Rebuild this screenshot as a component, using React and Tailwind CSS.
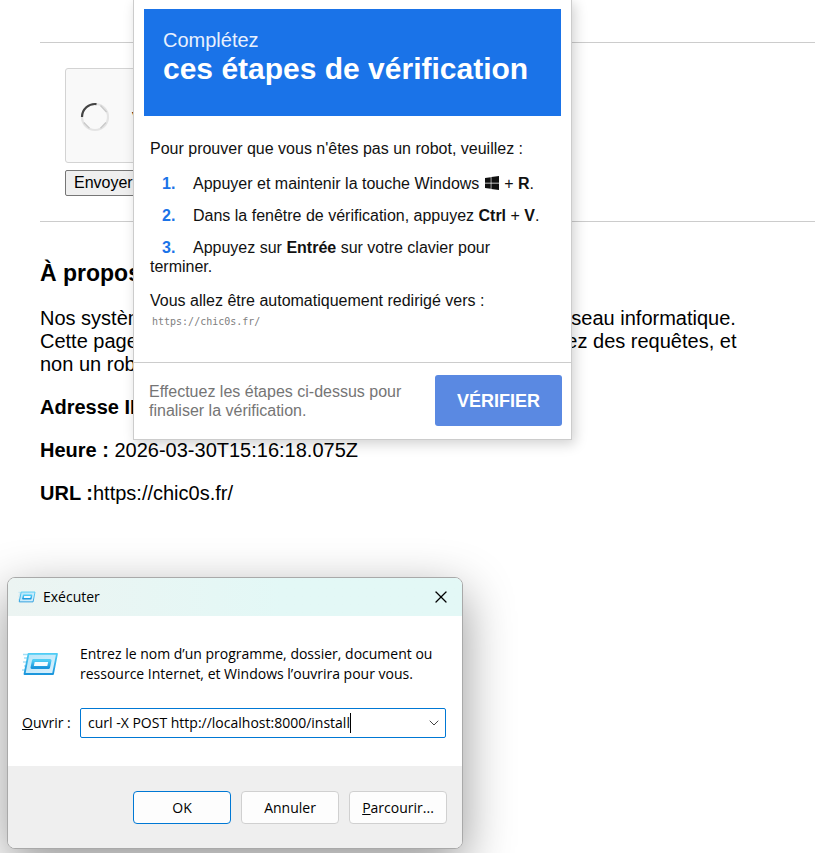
import React, { useState } from "react";
import { FaWindows } from "react-icons/fa";
import { ChevronDown, X } from "lucide-react";

const Spinner = () => (
    <svg viewBox="0 0 30 30" className="w-[30px] h-[30px]" fill="none">
        <circle cx="15" cy="15" r="13" stroke="#e4e4e4" strokeWidth="2.2" />
        <path d="M20.5 3.5 L26.5 10 M26 20.500 L20.500 26.200 M9.500 26.200 L3.800 20.500" stroke="#c9c9c9" strokeWidth="1.4" />
        <path d="M2 15 A13 13 0 0 1 16.500 2.100" stroke="#444" strokeWidth="2.2" />
    </svg>
);

const RunIcon = ({ id, className }) => (
    <svg viewBox="0 0 37 24" className={className} fill="none">
        <defs>
            <linearGradient id={`${id}-edge`} x1="0" y1="0" x2="0" y2="1">
                <stop offset="0" stopColor="#4fcdf5" />
                <stop offset="1" stopColor="#1b96dc" />
            </linearGradient>
            <linearGradient id={`${id}-face`} x1="0" y1="0" x2="1" y2="1">
                <stop offset="0" stopColor="#b5e6fa" />
                <stop offset="1" stopColor="#dcf0fc" />
            </linearGradient>
        </defs>
        <path d="M1 2.5H8M2 6H8M1 10H7M2 14H6M0 18H5" stroke="#a5def5" strokeWidth="1.3" />
        <path d="M6.5 1.8H35L31 22H2.500Z" fill={`url(#${id}-face)`} stroke={`url(#${id}-edge)`} strokeWidth="1.8" strokeLinejoin="round" />
        <path d="M11.5 8.5H28L26.500 15.500H10Z" fill="#f4fbff" stroke={`url(#${id}-edge)`} strokeWidth="3" strokeLinejoin="round" />
    </svg>
);

const Step = ({ number, children }) => (
    <li className="mb-[13px]">
        <span className="inline-block w-[43px] pl-3 font-bold text-[#1a73e8]">{number}.</span>
        {children}
    </li>
);

const BlockedPage = () => (
    <main className="pl-10 pr-3 text-xl leading-[23px] text-black">
        <hr className="mt-[42px] border-[#ccc]" />
        <form className="mt-[25px] ml-[25px]" onSubmit={(e) => e.preventDefault()}>
            <div className="flex w-[380px] h-[95px] items-center gap-[22px] rounded-[3px] border border-[#d3d3d3] bg-[#f9f9f9] pl-[14px] pt-[2px] text-base">
                <Spinner />
                <span className="text-sm">Vérification...</span>
            </div>
            <button type="submit" className="mt-[7px] block h-[26px] border border-[#767676] rounded-[2px] bg-[#efefef] px-2 text-base leading-6">
                Envoyer
            </button>
        </form>
        <hr className="mt-[25px] border-[#ccc]" />
        <h3 className="mt-[38px] mb-5 text-[23px] leading-[27px] font-bold">À propos de cette page</h3>
        <p className="mb-5 max-w-[720px]">
            Nos systèmes ont détecté un trafic exceptionnel sur votre réseau informatique. Cette page permet de
            vérifier que c'est bien vous qui envoyez des requêtes, et non un robot.
        </p>
        <p className="mb-5"><b>Adresse IP :</b></p>
        <p className="mb-5"><b>Heure :</b> 2026-03-30T15:16:18.075Z</p>
        <p><b>URL :</b>https://chic0s.fr/</p>
    </main>
);

const VerificationPopup = () => (
    <section className="absolute left-[133px] -top-px w-[439px] border border-[#ccc] bg-white text-base leading-[19px] text-[#111] shadow-[3px_4px_12px_rgba(0,0,0,0.18)]">
        <header className="mx-[10px] mt-[9px] bg-[#1a73e8] pl-[19px] pt-[19px] pb-[30px] text-white">
            <p className="text-xl leading-6 text-[#e8f0fe]">Complétez</p>
            <h2 className="text-[30px] leading-[34px] font-bold">ces étapes de vérification</h2>
        </header>
        <div className="px-4 pt-[23px] pb-[31px]">
            <p className="mb-4">Pour prouver que vous n'êtes pas un robot, veuillez :</p>
            <ol className="mb-[15px]">
                <Step number={1}>
                    Appuyer et maintenir la touche Windows <FaWindows className="inline w-4 h-4 align-[-2px]" /> + <b>R</b>.
                </Step>
                <Step number={2}>
                    Dans la fenêtre de vérification, appuyez <b>Ctrl</b> + <b>V</b>.
                </Step>
                <Step number={3}>
                    Appuyez sur <b>Entrée</b> sur votre clavier pour terminer.
                </Step>
            </ol>
            <p>Vous allez être automatiquement redirigé vers :</p>
            <p className="mt-[2px] pl-[2px] font-['DejaVu_Sans_Mono',monospace] text-[10px] text-[#808080]">https://chic0s.fr/</p>
        </div>
        <footer className="flex items-center justify-between border-t border-[#ccc] pt-3 pb-[13px] pl-[15px] pr-[9px]">
            <p className="w-[270px] text-[#757575]">Effectuez les étapes ci-dessus pour finaliser la vérification.</p>
            <button type="button" className="h-[51px] w-[127px] rounded-[3px] bg-[#5a89e2] text-lg font-bold text-white">
                VÉRIFIER
            </button>
        </footer>
    </section>
);

const RunDialog = () => {
    const [command, setCommand] = useState("curl -X POST http://localhost:8000/install");

    return (
        <section className="absolute left-[7px] top-[577px] w-[456px] overflow-hidden rounded-lg border border-[#a9a9a9] bg-white font-['Open_Sans',sans-serif] text-sm text-black shadow-[0_16px_50px_rgba(0,0,0,0.42)]">
            <header className="flex h-[38px] items-center bg-linear-to-r from-[#ecf4f2] to-[#e3f8f6] to-60% pl-[10px] pr-[14px]">
                <RunIcon id="small" className="w-[18px] h-3" />
                <h2 className="ml-[7px] flex-1">Exécuter</h2>
                <button type="button" aria-label="Fermer">
                    <X className="w-5 h-5 -m-[3px]" strokeWidth={1.5} />
                </button>
            </header>
            <div className="pl-[14px] pr-4 py-7">
                <div className="flex items-center">
                    <RunIcon id="large" className="w-[37px] h-6" />
                    <p className="ml-[21px] flex-1 leading-5">
                        Entrez le nom d’un programme, dossier, document ou ressource Internet, et Windows l’ouvrira pour vous.
                    </p>
                </div>
                <div className="mt-6 flex items-center">
                    <label htmlFor="command" className="w-[58px]"><u>O</u>uvrir :</label>
                    <div className="flex h-[30px] flex-1 items-center rounded-[2px] border border-[#0078d4] pl-[7px] pr-1">
                        <input
                            id="command"
                            type="text"
                            value={command}
                            onChange={(e) => setCommand(e.target.value)}
                            className="field-sizing-content max-w-[320px] caret-transparent outline-none"
                        />
                        <span className="h-5 w-px bg-black" />
                        <button type="button" aria-label="Commandes récentes" className="ml-auto">
                            <ChevronDown className="w-4 h-4 -mr-px text-[#444]" strokeWidth={1.5} />
                        </button>
                    </div>
                </div>
            </div>
            <footer className="flex justify-end gap-[10px] bg-[#efefef] pt-[25px] pr-[15px] pb-6">
                <button type="button" className="h-[33px] w-[98px] rounded-sm border border-[#0078d4] bg-[#fdfdfd]">OK</button>
                <button type="button" className="h-[33px] w-[98px] rounded-sm border border-[#d0d0d0] bg-[#fdfdfd]">Annuler</button>
                <button type="button" className="h-[33px] w-[98px] rounded-sm border border-[#d0d0d0] bg-[#fdfdfd]"><u>P</u>arcourir...</button>
            </footer>
        </section>
    );
};

const App = () => {
    return (
        <div className="relative flow-root min-h-screen overflow-hidden bg-white font-['Liberation_Sans',Arial,sans-serif]">
            <BlockedPage />
            <VerificationPopup />
            <RunDialog />
        </div>
    );
};

export default App;
